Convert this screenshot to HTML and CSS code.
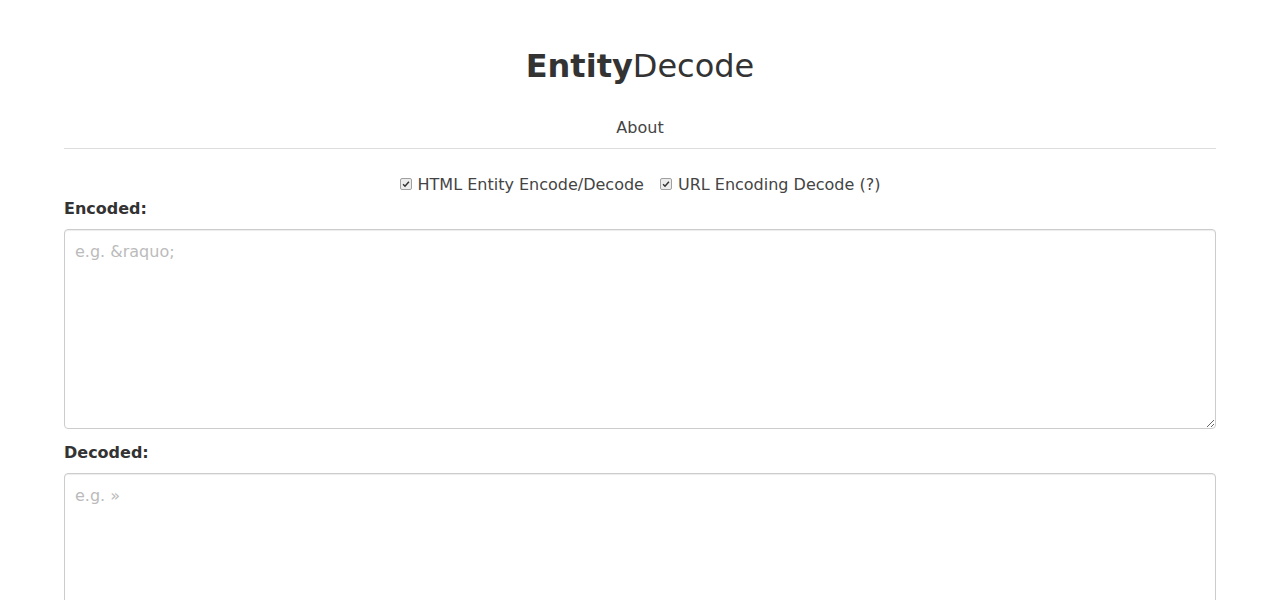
FILE: index.html
```html
<!DOCTYPE html>
<html lang="en">
<head>
<meta charset="utf-8">
<title>EntityDecode</title>
<link rel="stylesheet" href="styles.css">
</head>
<body>
<div class="container">
  <h1 class="title"><b>Entity</b>Decode</h1>
  <nav class="nav"><a href="#" class="nav-link">About</a></nav>
  <div class="options">
    <label class="opt"><input type="checkbox" checked class="chk"> HTML Entity Encode/Decode</label>
    <label class="opt"><input type="checkbox" checked class="chk"> URL Encoding Decode (?)</label>
  </div>
  <label class="field-label" for="enc">Encoded:</label>
  <textarea id="enc" class="box" placeholder="e.g. &amp;raquo;"></textarea>
  <label class="field-label" for="dec">Decoded:</label>
  <textarea id="dec" class="box" placeholder="e.g. &raquo;"></textarea>
</div>
</body>
</html>
```
FILE: styles.css
```css
html, body {
  margin: 0;
  padding: 0;
  background: #fff;
}
body {
  font-family: "DejaVu Sans", "Liberation Sans", sans-serif;
  font-size: 16px;
  line-height: 1.42857;
  color: #333;
}
.container {
  width: 90%;
  margin: 0 auto;
}
.title {
  margin: 49px 0 0;
  font-size: 32px;
  line-height: 35px;
  font-weight: normal;
  text-align: center;
  color: #333;
}
.title b {
  font-weight: bold;
}
.nav {
  margin-top: 33px;
  padding-bottom: 8px;
  border-bottom: 1px solid #ddd;
  text-align: center;
}
.nav-link {
  color: #444;
  text-decoration: none;
}
.options {
  margin-top: 25px;
  display: flex;
  justify-content: center;
  gap: 16px;
}
.opt {
  display: flex;
  align-items: center;
  gap: 6px;
  color: #444;
}
.chk {
  appearance: none;
  -webkit-appearance: none;
  margin: 0;
  width: 12px;
  height: 12px;
  border: 1px solid #a0a0a0;
  border-radius: 2px;
  background: #ececec url("data:image/svg+xml;utf8,<svg xmlns='http://www.w3.org/2000/svg' viewBox='0 0 12 12'><path d='M2.5 6.3 L4.8 8.6 L9.5 3.3' fill='none' stroke='%23333' stroke-width='1.8'/></svg>") center/10px 10px no-repeat;
  position: relative;
  top: -1px;
}
.field-label {
  display: block;
  margin-top: 1px;
  font-weight: bold;
}
.box {
  display: block;
  box-sizing: border-box;
  width: 100%;
  height: 200px;
  margin: 8px 0 13px;
  padding: 11px 10px 9px;
  border: 1px solid #ccc;
  border-radius: 4px;
  box-shadow: inset 0 1px 1px rgba(0,0,0,.075);
  font-family: "DejaVu Sans", "Liberation Sans", sans-serif;
  font-size: 16px;
  line-height: 1.42857;
  color: #555;
  resize: vertical;
}
#dec {
  margin-top: 9px;
}
.box::placeholder {
  color: #bbb;
}
```
